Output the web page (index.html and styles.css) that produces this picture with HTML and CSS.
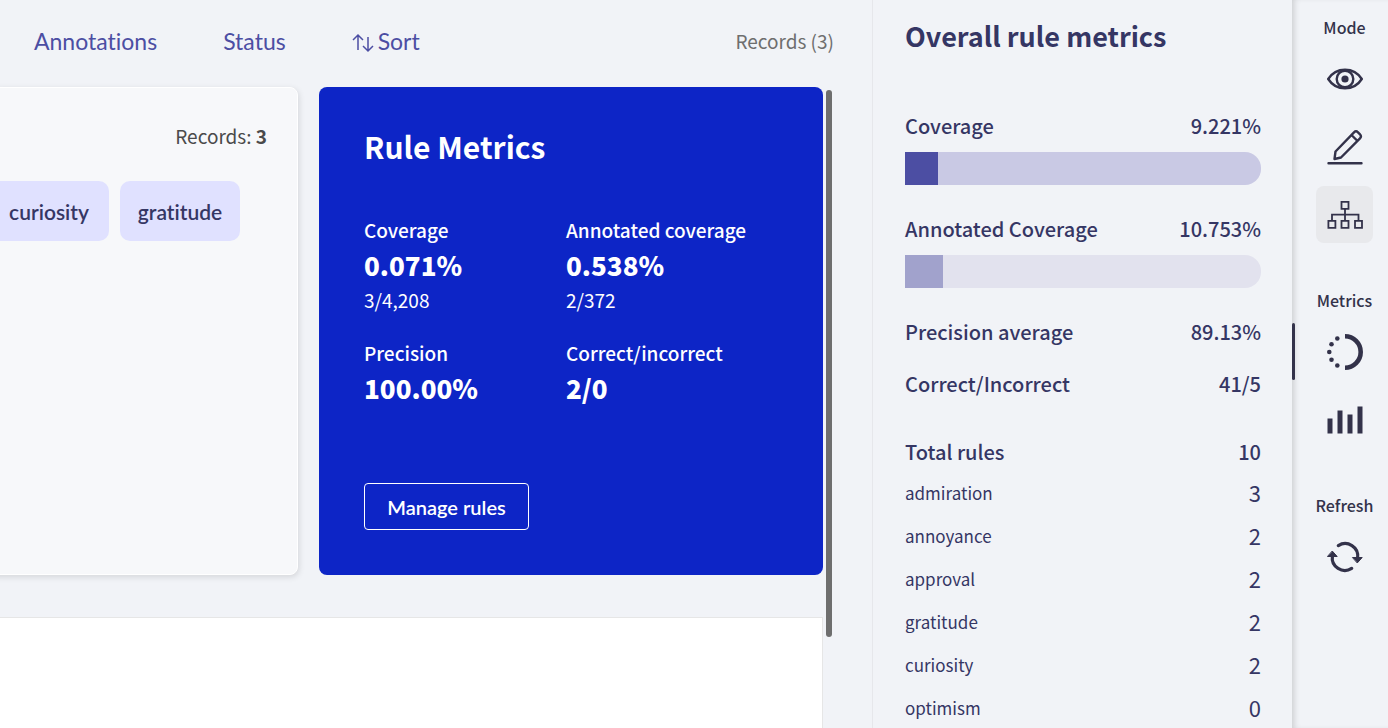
FILE: index.html
```html
<!DOCTYPE html>
<html lang="en">
<head>
<meta charset="utf-8">
<title>Rule metrics</title>
<link rel="stylesheet" href="styles.css">
</head>
<body>
<div class="app">
  <main class="main">
    <header class="filters">
      <button class="filter" type="button">Annotations</button>
      <button class="filter" type="button">Status</button>
      <button class="filter filter-sort" type="button">
        <svg class="sort-icon" width="22" height="20" viewBox="0 0 22 20" fill="none" stroke="currentColor" stroke-width="1.5"><path d="M6 17V2M1 7l5-5 5 5M16 4v14M11 13l5 5 5-5"/></svg>
        Sort
      </button>
      <span class="total">Records (3)</span>
    </header>
    <div class="content">
      <div class="cards">
        <section class="query">
          <p class="query-records">Records: <strong>3</strong></p>
          <div class="labels">
            <button class="label" type="button">curiosity</button>
            <button class="label" type="button">gratitude</button>
          </div>
        </section>
        <section class="rule">
          <h2 class="rule-title">Rule Metrics</h2>
          <div class="rule-grid">
            <div class="stat"><p class="stat-name">Coverage</p><p class="stat-value">0.071%</p><p class="stat-note">3/4,208</p></div>
            <div class="stat"><p class="stat-name">Annotated coverage</p><p class="stat-value">0.538%</p><p class="stat-note">2/372</p></div>
            <div class="stat"><p class="stat-name">Precision</p><p class="stat-value">100.00%</p></div>
            <div class="stat"><p class="stat-name">Correct/incorrect</p><p class="stat-value">2/0</p></div>
          </div>
          <button class="manage" type="button">Manage rules</button>
        </section>
      </div>
      <div class="record"></div>
      <div class="scroll-thumb"></div>
    </div>
  </main>
  <aside class="metrics">
    <h1 class="metrics-title">Overall rule metrics</h1>
    <div class="row"><span>Coverage</span><span>9.221%</span></div>
    <div class="bar"><div class="bar-fill" style="width:9.221%"></div></div>
    <div class="row"><span>Annotated Coverage</span><span>10.753%</span></div>
    <div class="bar bar-soft"><div class="bar-fill" style="width:10.753%"></div></div>
    <div class="row row-spaced"><span>Precision average</span><span>89.13%</span></div>
    <div class="row row-last"><span>Correct/Incorrect</span><span>41/5</span></div>
    <div class="row row-total"><span>Total rules</span><span>10</span></div>
    <ul class="rules">
      <li><span>admiration</span><span class="count">3</span></li>
      <li><span>annoyance</span><span class="count">2</span></li>
      <li><span>approval</span><span class="count">2</span></li>
      <li><span>gratitude</span><span class="count">2</span></li>
      <li><span>curiosity</span><span class="count">2</span></li>
      <li><span>optimism</span><span class="count">0</span></li>
    </ul>
  </aside>
  <nav class="rail">
    <div class="group">
      <p class="group-name">Mode</p>
      <button class="tool" type="button" aria-label="Explore">
        <svg width="36" height="36" viewBox="0 0 36 36" fill="none" stroke="currentColor" stroke-width="2.400" stroke-linejoin="round"><path d="M1.200 18C5 12 11 8.700 18 8.700S31 12 34.800 18C31 24 25 27.300 18 27.300S5 24 1.200 18z"/><circle cx="18" cy="18" r="8.300"/><circle cx="18" cy="18" r="3.600" fill="currentColor" stroke="none"/></svg>
      </button>
      <button class="tool" type="button" aria-label="Annotate">
        <svg width="36" height="36" viewBox="0 0 36 36" fill="none" stroke="currentColor" stroke-width="2.400" stroke-linejoin="round" stroke-linecap="round"><path d="M7.500 30l1-7.500L27 3.300q2-2 4 0l2 2q2 2 0 4L14 28.500zM24.500 6l6 6M1.500 34.300h33"/></svg>
      </button>
      <button class="tool tool-active" type="button" aria-label="Rules">
        <svg width="36" height="36" viewBox="0 0 36 36" fill="none" stroke="currentColor" stroke-width="1.800"><path d="M14.500 4.900h7v7h-7zM1.400 23.900h7v7h-7zM14.500 23.900h7v7h-7zM28 23.900h7v7h-7zM18 12v12M5 24v-6.300h26.500V24"/></svg>
      </button>
    </div>
    <div class="group">
      <p class="group-name">Metrics</p>
      <button class="tool tool-open" type="button" aria-label="Progress">
        <svg width="36" height="36" viewBox="0 0 36 36" fill="currentColor"><path d="M18 0a18 18 0 0 1 0 36v-4.600a13.400 13.400 0 0 0 0-26.800z"/><circle cx="10.300" cy="4.500" r="2.300"/><circle cx="4.500" cy="10.200" r="2.300"/><circle cx="2.300" cy="18" r="2.300"/><circle cx="4.500" cy="25.800" r="2.300"/><circle cx="10.300" cy="31.500" r="2.300"/></svg>
      </button>
      <button class="tool" type="button" aria-label="Stats">
        <svg width="36" height="36" viewBox="0 0 36 36" fill="currentColor"><path d="M.5 16.500h5v15h-5zM10.500 8.500h5v23h-5zM20.500 12.500h5v19h-5zM30.500 4.500h5v27h-5z"/></svg>
      </button>
    </div>
    <div class="group">
      <p class="group-name">Refresh</p>
      <button class="tool" type="button" aria-label="Refresh">
        <svg width="36" height="36" viewBox="0 0 36 36" fill="none" stroke="currentColor" stroke-width="3.200" stroke-linecap="round"><path d="M11.300 6.600A12.600 12.600 0 0 1 30.600 19M24.700 29.400A12.600 12.600 0 0 1 5.400 17"/><path d="M25.800 18.500h9.400l-4.700 5.200zM.8 17.500h9.400l-4.700-5.200z" fill="currentColor" stroke-width="1" stroke-linejoin="round"/></svg>
      </button>
    </div>
  </nav>
</div>
</body>
</html>
```
FILE: styles.css
```css
* { box-sizing: border-box; }
body, h1, h2, p, ul { margin: 0; padding: 0; }
body {
  background: #f1f3f7;
  color: #353664;
  font-family: "Noto Sans CJK SC", "Noto Sans", sans-serif;
  font-size: 20px;
  line-height: 30px;
}
button {
  font-family: Lato, sans-serif;
  font-variant-ligatures: none;
  border: 0;
  background: none;
  padding: 0;
  color: inherit;
}
svg { display: block; }
.app { display: flex; height: 100vh; overflow: hidden; }

.main { flex: 1; display: flex; flex-direction: column; padding-right: 49px; min-width: 0; }
.filters { display: flex; align-items: center; height: 87px; padding: 0 0 6px 34px; gap: 66px; flex: none; margin-right: -11px; }
.filter { font-size: 23px; line-height: 30px; color: #4c4ea3; }
.filter-sort { display: flex; align-items: center; gap: 4px; }
.sort-icon { margin-top: 5px; }
.total { margin-left: auto; font-size: 19px; color: #6e6e6e; }

.content { position: relative; flex: 1; display: flex; flex-direction: column; }
.cards { display: flex; gap: 21px; height: 488px; margin-left: -12px; flex: none; }
.query {
  flex: 1;
  background: #f7f8fa;
  border: 1px solid #fff;
  border-radius: 8px;
  box-shadow: 1px 2px 6px rgba(0, 0, 0, .12);
  padding: 33px 30px 0 0;
}
.query-records { text-align: right; color: #4a4a4a; font-size: 19px; }
.labels { display: flex; gap: 11px; margin-top: 30px; }
.label { width: 120px; height: 60px; border-radius: 10px; background: #e0e1ff; color: #353664; font-size: 21px; font-weight: 600; }

.rule { width: 504px; background: #0d25c6; color: #fff; border-radius: 8px; padding: 38px 9px 38px 45px; }
.rule-title { font-size: 30px; line-height: 42px; font-weight: 700; }
.rule-grid { display: grid; grid-template-columns: 202px 1fr; row-gap: 23px; margin: 48px 0 75px; }
.stat-name { font-size: 19px; font-weight: 500; }
.stat-value { font-size: 26px; line-height: 40px; font-weight: 900; }
.stat-note { font-size: 19px; }
.manage { width: 165px; height: 47px; border: 1px solid #fff; border-radius: 4px; font-size: 20px; font-weight: 600; }

.record { margin-top: 42px; flex: 1; background: #fff; border: 1px solid #e6e6e6; border-width: 1px 1px 0 0; }
.scroll-thumb { position: absolute; top: 3px; right: -9px; width: 6px; height: 547px; border-radius: 3px; background: #6e6e6e; }

.metrics { width: 420px; padding: 15px 31px 0 32px; border-left: 1px solid #e6e7eb; overflow: hidden; flex: none; }
.metrics-title { font-size: 27px; line-height: 42px; font-weight: 700; margin-bottom: 54px; }
.row { display: flex; justify-content: space-between; font-weight: 500; }
.bar { height: 33px; margin: 11px 0 29px; background: #c9c9e4; border-radius: 0 16px 16px 0; overflow: hidden; }
.bar-fill { height: 100%; background: #4c4ea3; }
.bar-soft { background: #e2e2ee; }
.bar-soft .bar-fill { background: #a1a2cc; }
.row-spaced { margin-bottom: 22px; }
.row-last { margin-bottom: 38px; }
.row-total { margin-bottom: 4px; }
.rules { list-style: none; }
.rules li { display: flex; justify-content: space-between; align-items: center; height: 43px; font-size: 17px; }
.count { font-size: 22px; line-height: 28px; margin-bottom: 2px; }

.rail { width: 96px; flex: none; padding: 15px 0 0 9px; box-shadow: inset 5px 0 6px -3px rgba(0, 0, 0, .16); color: #33324a; }
.group { display: flex; flex-direction: column; align-items: center; gap: 11px; margin-bottom: 45px; }
.group-name { font-size: 16px; line-height: 24px; font-weight: 500; }
.tool { position: relative; width: 57px; height: 57px; border-radius: 8px; display: grid; place-items: center; }
.tool-active { background: #e8e9ec; }
.tool-open::before { content: ""; position: absolute; left: -24px; top: 0; width: 3px; height: 57px; border-radius: 2px; background: #33324a; }
```
